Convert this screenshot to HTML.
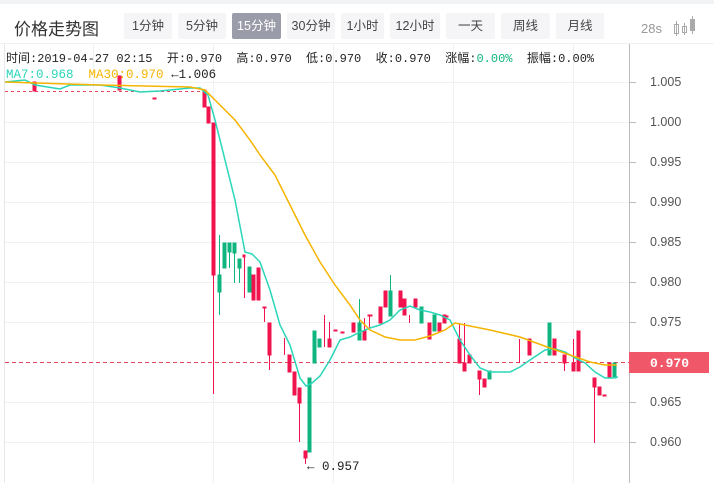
<!DOCTYPE html><html><head><meta charset="utf-8"><style>
body{margin:0;width:714px;height:483px;background:#fff;overflow:hidden;font-family:"Liberation Sans","Noto Sans CJK SC",sans-serif;position:relative}
.t{position:absolute;left:14px;top:15px;font-size:17px;color:#333}
.b{position:absolute;top:13px;height:26px;line-height:26px;background:#f5f5f7;color:#444;font-size:12.5px;text-align:center;border-radius:2px}
.b.a{background:#9b9caa;color:#fff}
.info{position:absolute;left:6px;top:49px;font-family:"Liberation Mono","Noto Sans CJK SC",monospace;font-size:12px;color:#222;white-space:pre}
.ma{position:absolute;left:6px;top:68px;font-family:"Liberation Mono",monospace;font-size:12.5px;white-space:pre}
.ax{position:absolute;left:650px;font-size:12.5px;color:#555}
</style></head><body>
<div style="position:absolute;left:0;top:0;width:714px;height:4px;background:#f2f3f5"></div>
<div class="t">价格走势图</div>
<div class="b" style="left:124px;width:48px">1分钟</div>
<div class="b" style="left:178px;width:48px">5分钟</div>
<div class="b a" style="left:232px;width:49px">15分钟</div>
<div class="b" style="left:287px;width:48px">30分钟</div>
<div class="b" style="left:341px;width:43px">1小时</div>
<div class="b" style="left:390px;width:50px">12小时</div>
<div class="b" style="left:446px;width:49px">一天</div>
<div class="b" style="left:501px;width:49px">周线</div>
<div class="b" style="left:556px;width:48px">月线</div>
<div style="position:absolute;left:641px;top:21px;font-size:13px;color:#999">28s</div>
<svg style="position:absolute;left:672px;top:14px" width="26" height="24"><g stroke="#aaa" fill="none"><rect x="2.5" y="10.5" width="4" height="9"/><line x1="4.5" y1="7" x2="4.5" y2="22"/><rect x="10.5" y="12.5" width="4" height="6"/><line x1="12.5" y1="9" x2="12.5" y2="21"/><rect x="18.5" y="5.5" width="4" height="11" fill="#aaa"/><line x1="20.5" y1="2" x2="20.5" y2="20"/></g></svg>
<div style="position:absolute;left:0;top:43px;width:714px;height:1px;background:#eef0f3"></div>
<svg style="position:absolute;left:0;top:0" width="714" height="483">
<g stroke="#eef2f5" stroke-width="1">
<line x1="93.5" y1="44" x2="93.5" y2="483"/><line x1="213.5" y1="44" x2="213.5" y2="483"/><line x1="333.5" y1="44" x2="333.5" y2="483"/><line x1="453.5" y1="44" x2="453.5" y2="483"/><line x1="573.5" y1="44" x2="573.5" y2="483"/>
<line x1="5" y1="82.5" x2="629" y2="82.5"/><line x1="5" y1="122.5" x2="629" y2="122.5"/><line x1="5" y1="162.5" x2="629" y2="162.5"/><line x1="5" y1="202.5" x2="629" y2="202.5"/><line x1="5" y1="242.5" x2="629" y2="242.5"/><line x1="5" y1="282.5" x2="629" y2="282.5"/><line x1="5" y1="322.5" x2="629" y2="322.5"/><line x1="5" y1="402.5" x2="629" y2="402.5"/><line x1="5" y1="442.5" x2="629" y2="442.5"/>
</g>
<line x1="4.5" y1="44" x2="4.5" y2="483" stroke="#e6e8eb"/>
<line x1="629.5" y1="44" x2="629.5" y2="483" stroke="#bbb"/>
<g stroke="#bbb"><line x1="629" y1="82.5" x2="636" y2="82.5"/><line x1="629" y1="122.5" x2="636" y2="122.5"/><line x1="629" y1="162.5" x2="636" y2="162.5"/><line x1="629" y1="202.5" x2="636" y2="202.5"/><line x1="629" y1="242.5" x2="636" y2="242.5"/><line x1="629" y1="282.5" x2="636" y2="282.5"/><line x1="629" y1="322.5" x2="636" y2="322.5"/><line x1="629" y1="402.5" x2="636" y2="402.5"/><line x1="629" y1="442.5" x2="636" y2="442.5"/></g>
<line x1="5" y1="362.5" x2="629" y2="362.5" stroke="#e8475f" stroke-dasharray="4,3"/>
<line x1="5" y1="91.5" x2="205" y2="91.5" stroke="#e8475f" stroke-dasharray="3,3"/>
<g fill="#f0134d" stroke="#f0134d">
<rect x="33" y="82" width="3" height="9"/><rect x="118" y="76" width="3" height="14"/><rect x="153" y="98" width="3" height="1"/>
<rect x="203" y="90" width="3" height="17"/><rect x="207" y="107" width="3" height="16"/>
<rect x="212" y="123" width="3" height="152"/><line x1="213.5" y1="275" x2="213.5" y2="394"/>
<line x1="244.5" y1="255" x2="244.5" y2="298"/><rect x="243" y="255" width="2" height="2"/>
<rect x="252" y="275" width="3" height="25"/><rect x="257" y="268" width="3" height="32"/>
<line x1="264.5" y1="307" x2="264.5" y2="322"/><rect x="263" y="307" width="3" height="1"/>
<rect x="268" y="323" width="3" height="32"/><line x1="269.5" y1="355" x2="269.5" y2="370"/>
<line x1="284.5" y1="338" x2="284.5" y2="355"/>
<rect x="288" y="355" width="3" height="17"/><rect x="293" y="372" width="3" height="23"/>
<rect x="298" y="388" width="3" height="15"/><line x1="299.5" y1="403" x2="299.5" y2="442"/>
<rect x="304" y="451" width="3" height="7"/><line x1="305.5" y1="458" x2="305.5" y2="464"/>
<line x1="324.5" y1="315" x2="324.5" y2="347"/><line x1="329.5" y1="322" x2="329.5" y2="347"/><rect x="328" y="339" width="3" height="8"/>
<rect x="334" y="330" width="3" height="1"/><rect x="341" y="332" width="3" height="1"/>
<rect x="352" y="323" width="3" height="9"/><rect x="363" y="331" width="3" height="9"/><line x1="364.5" y1="318" x2="364.5" y2="340"/>
<line x1="369.5" y1="315" x2="369.5" y2="330"/><rect x="368" y="315" width="4" height="1"/>
<rect x="379" y="307" width="3" height="16"/><rect x="384" y="291" width="3" height="16"/>
<rect x="399" y="291" width="3" height="16"/><rect x="403" y="299" width="3" height="16"/>
<line x1="409.5" y1="315" x2="409.5" y2="323"/><rect x="414" y="299" width="3" height="8"/>
<rect x="428" y="323" width="3" height="16"/><rect x="438" y="323" width="3" height="8"/><rect x="443" y="315" width="3" height="8"/><rect x="445" y="316" width="3" height="1"/>
<line x1="459.5" y1="323" x2="459.5" y2="339"/><rect x="458" y="339" width="3" height="24"/>
<line x1="464.5" y1="323" x2="464.5" y2="371"/><rect x="463" y="363" width="3" height="8"/>
<rect x="468" y="355" width="3" height="8"/>
<rect x="478" y="371" width="3" height="8"/><line x1="479.5" y1="379" x2="479.5" y2="395"/><rect x="483" y="379" width="3" height="8"/>
<line x1="519.5" y1="339" x2="519.5" y2="363"/><rect x="528" y="339" width="3" height="16"/><rect x="553" y="339" width="3" height="16"/>
<rect x="563" y="355" width="3" height="8"/><line x1="564.5" y1="363" x2="564.5" y2="371"/>
<line x1="573.5" y1="339" x2="573.5" y2="371"/><rect x="572" y="363" width="3" height="8"/><rect x="577" y="331" width="3" height="40"/>
<rect x="593" y="378" width="3" height="9"/><line x1="594.5" y1="387" x2="594.5" y2="443"/><rect x="598" y="387" width="3" height="8"/><rect x="603" y="395" width="3" height="1"/>
<rect x="608" y="363" width="3" height="15"/>
</g>
<g fill="#0fb57f" stroke="#0fb57f">
<rect x="218" y="275" width="3" height="17"/><line x1="219.5" y1="235" x2="219.5" y2="315"/>
<rect x="223" y="243" width="3" height="25"/><rect x="228" y="243" width="3" height="9"/><line x1="229.5" y1="252" x2="229.5" y2="268"/>
<line x1="234.5" y1="243" x2="234.5" y2="283"/><rect x="233" y="243" width="3" height="10"/>
<rect x="238" y="259" width="3" height="9"/><line x1="239.5" y1="268" x2="239.5" y2="283"/>
<rect x="248" y="267" width="3" height="25"/>
<rect x="308" y="378" width="3" height="74"/>
<rect x="313" y="331" width="3" height="32"/><rect x="318" y="339" width="3" height="8"/>
<rect x="358" y="323" width="3" height="17"/><line x1="359.5" y1="299" x2="359.5" y2="340"/>
<rect x="389" y="291" width="3" height="25"/><line x1="390.5" y1="275" x2="390.5" y2="316"/>
<rect x="420" y="307" width="3" height="16"/><rect x="433" y="315" width="3" height="16"/>
<rect x="488" y="371" width="3" height="8"/>
<rect x="548" y="323" width="3" height="32"/><rect x="613" y="363" width="3" height="15"/>
</g>
<polyline fill="none" stroke="#2ad6b8" stroke-width="1.5" points="5,82 25,80 35,85 60,89 70,85 100,85 120,88 140,92 160,91 190,88 200,88 208,95 215,120 225,160 235,200 245,252 252,254 260,262 270,290 280,325 290,345 300,378 306,386 312,383 320,376 330,360 340,340 350,337 360,332 370,328 380,325 390,320 400,310 410,306 420,310 430,312 440,315 450,320 460,340 470,355 480,368 490,372 510,372 520,367 530,360 545,350 555,349 565,352 575,358 585,363 595,372 605,378 612,378 618,377"/>
<polyline fill="none" stroke="#f5b400" stroke-width="1.5" points="5,82 100,85 190,87 205,90 215,100 235,120 250,140 260,155 275,175 290,205 305,235 320,262 335,285 350,305 360,320 370,330 385,337 400,340 415,340 430,336 445,330 455,323 465,325 490,330 520,337 550,348 570,355 590,362 605,365 617,365"/>
<rect x="629" y="352" width="80" height="21" fill="#f0586a"/>
<text x="650" y="367" font-family="Liberation Mono,monospace" font-size="13" fill="#fff" font-weight="bold">0.970</text>
<text x="307" y="470" font-family="Liberation Mono,monospace" font-size="12.5" fill="#222">← 0.957</text>
</svg>
<div class="info">时间:2019-04-27 02:15  开:0.970  高:0.970  低:0.970  收:0.970  涨幅:<span style="color:#0fb57f">0.00%</span>  振幅:0.00%</div>
<div class="ma"><span style="color:#2ad6b8">MA7:0.968</span>  <span style="color:#f5b400">MA30:0.970</span> <span style="color:#222">←1.006</span></div>
<div class="ax" style="top:75px">1.005</div><div class="ax" style="top:115px">1.000</div><div class="ax" style="top:155px">0.995</div><div class="ax" style="top:195px">0.990</div><div class="ax" style="top:235px">0.985</div><div class="ax" style="top:275px">0.980</div><div class="ax" style="top:315px">0.975</div><div class="ax" style="top:395px">0.965</div><div class="ax" style="top:435px">0.960</div>
</body></html>
